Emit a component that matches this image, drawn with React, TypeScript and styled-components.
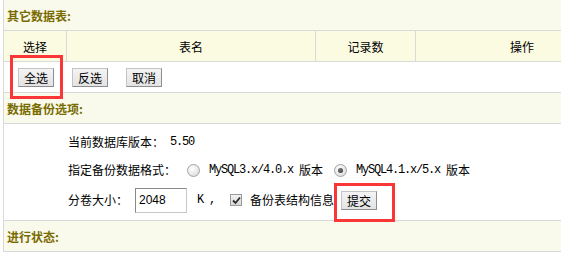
import React from "react";
import styled, { createGlobalStyle } from "styled-components";

const GlobalStyle = createGlobalStyle`
  html, body { margin: 0; padding: 0; background: #ffffff; overflow: hidden; }
  body {
    font-family: "Noto Sans CJK SC", "Liberation Sans", sans-serif;
    font-size: 12px;
    color: #000;
  }
`;

const LINE = "#d9d9d9";

const Page = styled.div`
  padding-left: 3px;
  width: 561px;
  box-sizing: border-box;
  overflow: hidden;
`;

const Frame = styled.div`
  border-left: 1px solid ${LINE};
  width: 624px;
`;

const TitleBand = styled.div`
  display: flex;
  align-items: center;
  padding-left: 3px;
  padding-top: 1px;
  background: #f9faec;
  border-bottom: 1px solid ${LINE};
  color: #7a6b00;
  font-weight: bold;
  font-size: 12px;
  line-height: 14px;
  box-sizing: border-box;
  height: 31px;
`;

const HeaderRow = styled.div`
  display: grid;
  grid-template-columns: 63px 249px 100px 1fr;
  height: 31px;
  box-sizing: border-box;
  background: #fbfbe1;
  border-bottom: 1px solid ${LINE};
`;

const HeaderCell = styled.div<{ $last?: boolean }>`
  display: flex;
  align-items: center;
  justify-content: center;
  border-right: ${(p) => (p.$last ? "none" : `1px solid ${LINE}`)};
  line-height: 14px;
  padding-top: 2px;
`;

const ButtonRow = styled.div`
  display: flex;
  align-items: center;
  gap: 18px;
  height: 31px;
  box-sizing: border-box;
  padding-left: 14px;
  background: #ffffff;
  border-bottom: 1px solid ${LINE};
`;

const Button = styled.button`
  height: 19px;
  padding: 0 5px;
  margin: 0;
  font-family: "Noto Sans CJK SC", sans-serif;
  font-size: 12px;
  line-height: 15px;
  color: #000;
  background: linear-gradient(#f4f4f4, #e3e3e3);
  border: 1px solid #c4c4c4;
  border-right-color: #8e8e8e;
  border-bottom-color: #8e8e8e;
  border-radius: 0;
  cursor: pointer;
`;

const Marked = styled.span<{ $t: number; $r: number; $b: number; $l: number; $ml?: number }>`
  position: relative;
  display: inline-flex;
  margin-left: ${(p) => p.$ml ?? 0}px;
  &::after {
    content: "";
    position: absolute;
    top: ${(p) => -p.$t}px;
    right: ${(p) => -p.$r}px;
    bottom: ${(p) => -p.$b}px;
    left: ${(p) => -p.$l}px;
    border: 3px solid #fb3636;
    pointer-events: none;
  }
`;

const Options = styled.div`
  background: #ffffff;
  border-bottom: 1px solid ${LINE};
  padding: 4px 0 4px 64px;
  height: 97px;
  box-sizing: border-box;
`;

const OptRow = styled.div<{ $h: number }>`
  display: flex;
  align-items: center;
  height: ${(p) => p.$h}px;
  line-height: 14px;
  white-space: nowrap;
`;

const Mono = styled.span<{ $ml?: number }>`
  font-family: "Liberation Mono", monospace;
  font-size: 12px;
  letter-spacing: -1.2px;
  white-space: pre;
  margin-left: ${(p) => p.$ml ?? 0}px;
`;

const Radio = styled.span<{ $checked?: boolean; $ml: number }>`
  display: inline-block;
  position: relative;
  width: 13px;
  height: 13px;
  box-sizing: border-box;
  border-radius: 50%;
  border: 1px solid #a4a4a4;
  background: radial-gradient(circle at 40% 35%, #ffffff 0%, #e6e6e6 60%, #d2d2d2 100%);
  margin-left: ${(p) => p.$ml}px;
  margin-right: 9px;
  &::after {
    content: "";
    display: ${(p) => (p.$checked ? "block" : "none")};
    position: absolute;
    left: 3px;
    top: 3px;
    width: 5px;
    height: 5px;
    border-radius: 50%;
    background: radial-gradient(circle at 40% 35%, #777, #333);
  }
`;

const SizeInput = styled.input`
  width: 52px;
  height: 25px;
  box-sizing: border-box;
  margin: 0 0 0 7px;
  padding: 0 3px;
  font-family: "Liberation Sans", Arial, sans-serif;
  font-size: 12px;
  color: #000;
  border: 1px solid #c8c8c8;
  border-top-color: #8a8a8a;
  border-left-color: #8a8a8a;
  background: #fff;
  outline: none;
`;

const CheckBox = styled.span`
  display: inline-flex;
  align-items: center;
  justify-content: center;
  width: 12px;
  height: 12px;
  box-sizing: border-box;
  border: 1px solid #9a9a9a;
  background: linear-gradient(#f2f2f2, #d8d8d8);
  margin-left: 15px;
  margin-right: 8px;
`;

export default function App() {
  return (
    <>
      <GlobalStyle />
      <Page>
        <Frame>
          <TitleBand>其它数据表:</TitleBand>
          <HeaderRow>
            <HeaderCell>选择</HeaderCell>
            <HeaderCell>表名</HeaderCell>
            <HeaderCell>记录数</HeaderCell>
            <HeaderCell $last>操作</HeaderCell>
          </HeaderRow>
          <ButtonRow>
            <Marked $t={13} $r={9} $b={12} $l={8}>
              <Button>全选</Button>
            </Marked>
            <Button>反选</Button>
            <Button>取消</Button>
          </ButtonRow>
          <TitleBand>数据备份选项:</TitleBand>
          <Options>
            <OptRow $h={28}>
              当前数据库版本：<Mono> 5.50</Mono>
            </OptRow>
            <OptRow $h={28}>
              指定备份数据格式：
              <Radio $ml={11} />
              <Mono>MySQL3.x/4.0.x </Mono>版本
              <Radio $ml={11} $checked />
              <Mono>MySQL4.1.x/5.x </Mono>版本
            </OptRow>
            <OptRow $h={32}>
              分卷大小：
              <SizeInput defaultValue="2048" />
              <Mono $ml={10}>K ,</Mono>
              <CheckBox>
                <svg width="9" height="9" viewBox="0 0 9 9">
                  <path d="M1 4.5 L3.5 7 L8 1.5" fill="none" stroke="#2a2a2a" strokeWidth="1.8" />
                </svg>
              </CheckBox>
              备份表结构信息
              <Marked $t={8} $r={18} $b={12} $l={7} $ml={7}>
                <Button>提交</Button>
              </Marked>
            </OptRow>
          </Options>
          <TitleBand>进行状态:</TitleBand>
        </Frame>
      </Page>
    </>
  );
}
